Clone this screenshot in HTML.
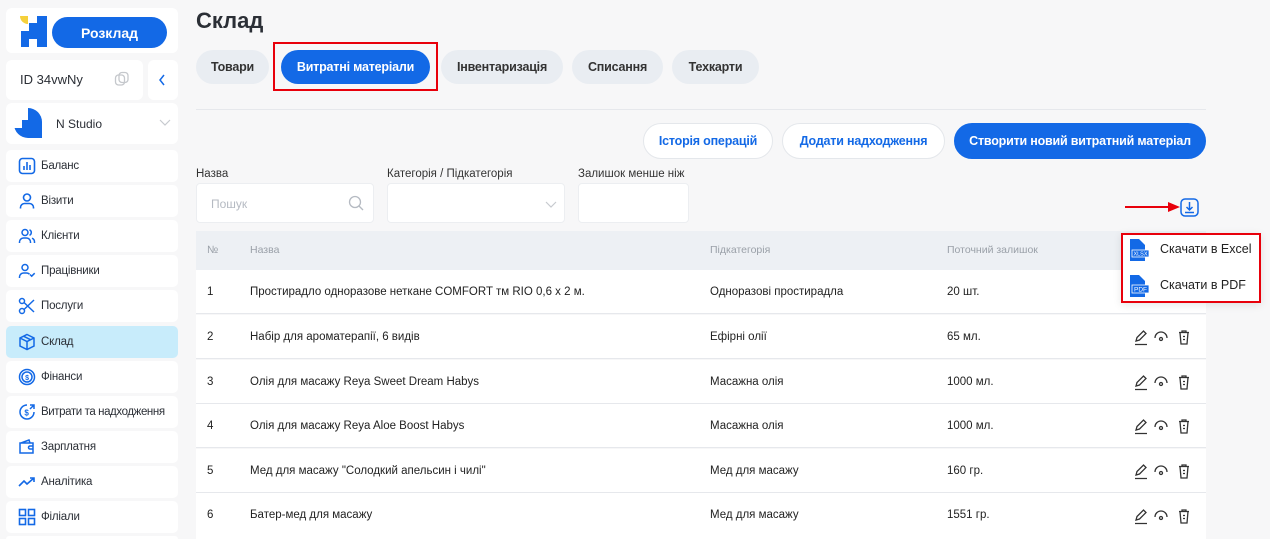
<!DOCTYPE html>
<html><head><meta charset="utf-8"><style>
*{box-sizing:border-box;margin:0;padding:0}
html,body{width:1270px;height:539px;overflow:hidden}
body{background:#f7f7f8;font-family:"Liberation Sans",Arial,sans-serif;position:relative;color:#2b2f36}
.a{position:absolute}
.card{position:absolute;background:#fff;border-radius:6px}
.mi{position:absolute;left:6px;width:172px;height:32px;background:#fff;border-radius:5px;font-size:11.5px;color:#2b2f36;white-space:nowrap;letter-spacing:-0.2px}
.mi svg{position:absolute;left:12px;top:7px;width:18px;height:18px}
.mi span{position:absolute;left:35px;top:10px}
.tab{position:absolute;top:50px;height:34px;border-radius:17px;background:#e9edf2;font-size:12.5px;font-weight:bold;color:#333;display:flex;align-items:center;justify-content:center;white-space:nowrap;letter-spacing:-0.2px}
.btn{position:absolute;top:123px;height:36px;border-radius:18px;background:#fff;border:1px solid #e4e7eb;color:#1369e6;font-size:12.5px;font-weight:bold;display:flex;align-items:center;justify-content:center;white-space:nowrap;letter-spacing:-0.2px}
.lbl{position:absolute;top:168px;font-size:11.5px;color:#333}
.inp{position:absolute;top:183px;height:40px;background:#fff;border:1px solid #eceef1;border-radius:4px}
.row{position:absolute;left:196px;width:1010px;height:44px;background:#fff;border-bottom:1px solid #e6e8ec;font-size:11.5px;color:#222;white-space:nowrap}
.row span{position:absolute;top:16px}
</style></head><body>

<!-- sidebar -->
<div class="card" style="left:6px;top:8px;width:172px;height:45px"></div>
<div class="a" style="left:20px;top:16px;width:8px;height:8px;background:#f5d03b;border-radius:0 0 0 8px"></div>
<div class="a" style="left:29px;top:23px;width:8px;height:8px;background:#1369e6"></div>
<div class="a" style="left:21px;top:31px;width:26px;height:8px;background:#1369e6"></div>
<div class="a" style="left:21px;top:39px;width:8px;height:8px;background:#1369e6"></div>
<div class="a" style="left:37px;top:39px;width:10px;height:8px;background:#1369e6"></div>
<div class="a" style="left:37px;top:16px;width:10px;height:16px;background:#1369e6"></div>
<div class="a" style="left:52px;top:17px;width:115px;height:31px;background:#1369e6;border-radius:16px;color:#fff;font-weight:bold;font-size:14px;display:flex;align-items:center;justify-content:center">Розклад</div>

<div class="card" style="left:6px;top:60px;width:137px;height:40px"></div>
<div class="a" style="left:20px;top:72px;font-size:13px">ID 34vwNy</div>
<svg class="a" style="left:114px;top:71px" width="16" height="16" viewBox="0 0 16 16" fill="none" stroke="#c5c8cc" stroke-width="1.3"><rect x="1.5" y="4" width="9" height="10" rx="3"/><rect x="5" y="1.5" width="9" height="10" rx="3"/></svg>
<div class="card" style="left:148px;top:60px;width:30px;height:40px"></div>
<svg class="a" style="left:158px;top:74px" width="8" height="12" viewBox="0 0 8 12" fill="none" stroke="#1369e6" stroke-width="1.5"><path d="M6 1L2 6l4 5"/></svg>

<div class="card" style="left:6px;top:103px;width:172px;height:41px"></div>
<div class="a" style="left:14px;top:108px;width:28px;height:30px;background:#1369e6;border-radius:0 14px 0 14px"></div>
<div class="a" style="left:14px;top:108px;width:14px;height:12px;background:#fff"></div>
<div class="a" style="left:14px;top:120px;width:8px;height:8px;background:#fff"></div>
<div class="a" style="left:56px;top:117px;font-size:12px">N Studio</div>
<svg class="a" style="left:159px;top:119px" width="12" height="8" viewBox="0 0 12 8" fill="none" stroke="#c7cacf" stroke-width="1.2"><path d="M1 1l5 5 5-5"/></svg>

<div class="mi" style="top:150px"><svg viewBox="0 0 18 18" fill="none" stroke="#1369e6" stroke-width="1.6"><rect x="1.5" y="1.5" width="15" height="15" rx="3"/><path d="M6 13V9M9 13V5M12 13V8"/></svg><span>Баланс</span></div>
<div class="mi" style="top:185px"><svg viewBox="0 0 18 18" fill="none" stroke="#1369e6" stroke-width="1.6"><circle cx="9" cy="5.5" r="3.5"/><path d="M2.5 16.5v-1a4 4 0 0 1 4-4h5a4 4 0 0 1 4 4v1"/></svg><span>Візити</span></div>
<div class="mi" style="top:220px"><svg viewBox="0 0 18 18" fill="none" stroke="#1369e6" stroke-width="1.5"><circle cx="7" cy="5.5" r="3"/><path d="M1.5 16v-1a4 4 0 0 1 4-4h3a4 4 0 0 1 4 4v1M11.5 2.8a3 3 0 0 1 0 5.5M14 11.2a4 4 0 0 1 2.5 3.8v1"/></svg><span>Клієнти</span></div>
<div class="mi" style="top:255px"><svg viewBox="0 0 18 18" fill="none" stroke="#1369e6" stroke-width="1.5"><circle cx="7" cy="5.5" r="3"/><path d="M1.5 16v-1a4 4 0 0 1 4-4h3a4 4 0 0 1 3 1.3M12 12.5l1.7 1.7 3-3"/></svg><span>Працівники</span></div>
<div class="mi" style="top:290px"><svg viewBox="0 0 18 18" fill="none" stroke="#1369e6" stroke-width="1.5"><circle cx="4" cy="4" r="2.5"/><circle cx="4" cy="14" r="2.5"/><path d="M6 5.5L16 15M6 12.5L16 3"/></svg><span>Послуги</span></div>
<div class="mi" style="top:326px;background:#c8ecfb"><svg viewBox="0 0 18 18" fill="none" stroke="#1369e6" stroke-width="1.5"><path d="M9 1.5l7 3.5v8L9 16.5 2 13V5zM2 5l7 3.5L16 5M9 8.5v8M5.5 3.2l7 3.5"/></svg><span>Склад</span></div>
<div class="mi" style="top:361px"><svg viewBox="0 0 18 18" fill="none" stroke="#1369e6" stroke-width="1.5"><circle cx="9" cy="9" r="7.5"/><circle cx="9" cy="9" r="5"/><text x="9" y="12" font-size="7" text-anchor="middle" fill="#1369e6" stroke="none" font-weight="bold">$</text></svg><span>Фінанси</span></div>
<div class="mi" style="top:396px"><svg viewBox="0 0 18 18" fill="none" stroke="#1369e6" stroke-width="1.5"><path d="M16 9A7 7 0 1 1 9 2M12 2h4v4M16 2l-4 4"/><text x="8.5" y="12.5" font-size="8" text-anchor="middle" fill="#1369e6" stroke="none" font-weight="bold">$</text></svg><span style="letter-spacing:-0.4px">Витрати та надходження</span></div>
<div class="mi" style="top:431px"><svg viewBox="0 0 18 18" fill="none" stroke="#1369e6" stroke-width="1.5"><path d="M3 5l8-3 1 3M2 5h13v10H2zM15 8h-3a1.5 1.5 0 0 0 0 3h3"/></svg><span>Зарплатня</span></div>
<div class="mi" style="top:466px"><svg viewBox="0 0 18 18" fill="none" stroke="#1369e6" stroke-width="1.6"><path d="M1 13l5-5 3 3 7-6M12 5h4v4"/></svg><span>Аналітика</span></div>
<div class="mi" style="top:501px"><svg viewBox="0 0 18 18" fill="none" stroke="#1369e6" stroke-width="1.6"><rect x="1.5" y="1.5" width="6" height="6"/><rect x="10.5" y="1.5" width="6" height="6"/><rect x="1.5" y="10.5" width="6" height="6"/><rect x="10.5" y="10.5" width="6" height="6"/></svg><span>Філіали</span></div>
<div class="mi" style="top:536px;height:3px;border-radius:5px 5px 0 0"></div>

<!-- main -->
<div class="a" style="left:196px;top:8px;font-size:22px;font-weight:bold;color:#2b2f36">Склад</div>
<div class="tab" style="left:196px;width:73px">Товари</div>
<div class="tab" style="left:281px;width:149px;background:#1369e6;color:#fff">Витратні матеріали</div>
<div class="a" style="left:273px;top:42px;width:165px;height:49px;border:2px solid #e8000b"></div>
<div class="tab" style="left:441px;width:122px">Інвентаризація</div>
<div class="tab" style="left:572px;width:91px">Списання</div>
<div class="tab" style="left:672px;width:87px">Техкарти</div>
<div class="a" style="left:196px;top:109px;width:1010px;height:1px;background:#e6e8ec"></div>

<div class="btn" style="left:643px;width:130px">Історія операцій</div>
<div class="btn" style="left:782px;width:163px">Додати надходження</div>
<div class="btn" style="left:954px;width:252px;background:#1369e6;color:#fff;border-color:#1369e6">Створити новий витратний матеріал</div>

<div class="lbl" style="left:196px">Назва</div>
<div class="lbl" style="left:387px">Категорія / Підкатегорія</div>
<div class="lbl" style="left:578px">Залишок менше ніж</div>
<div class="inp" style="left:196px;width:178px"><span class="a" style="left:14px;top:13px;font-size:12px;color:#b5bac2">Пошук</span>
<svg class="a" style="left:151px;top:11px" width="16" height="16" viewBox="0 0 16 16" fill="none" stroke="#b5bac2" stroke-width="1.3"><circle cx="7" cy="7" r="5.5"/><path d="M11 11l4 4"/></svg></div>
<div class="inp" style="left:387px;width:178px"><svg class="a" style="left:157px;top:17px" width="12" height="8" viewBox="0 0 12 8" fill="none" stroke="#c7cacf" stroke-width="1.2"><path d="M1 1l5 5 5-5"/></svg></div>
<div class="inp" style="left:578px;width:111px"></div>

<!-- download -->
<div class="a" style="left:1125px;top:206px;width:46px;height:2px;background:#e8000b"></div>
<div class="a" style="left:1168px;top:202px;width:0;height:0;border-left:12px solid #e8000b;border-top:5px solid transparent;border-bottom:5px solid transparent"></div>
<svg class="a" style="left:1180px;top:198px" width="19" height="19" viewBox="0 0 19 19" fill="none" stroke="#1369e6" stroke-width="1.5"><rect x="1" y="1" width="17" height="17" rx="4"/><path d="M9.5 4v8M6.5 9l3 3 3-3M5 14.5h9"/></svg>

<!-- table -->
<div class="a" style="left:196px;top:231px;width:1010px;height:39px;background:#edf0f4;font-size:10.5px;color:#9aa0a8">
<span class="a" style="left:11px;top:13px">№</span><span class="a" style="left:54px;top:13px">Назва</span><span class="a" style="left:514px;top:13px">Підкатегорія</span><span class="a" style="left:751px;top:13px">Поточний залишок</span></div>

<div class="row" style="top:270px"><span style="left:11px">1</span><span style="left:54px">Простирадло одноразове нетканe COMFORT тм RIO 0,6 х 2 м.</span><span style="left:514px">Одноразові простирадла</span><span style="left:751px">20 шт.</span></div>
<div class="row" style="top:315px"><span style="left:11px">2</span><span style="left:54px">Набір для ароматерапії, 6 видів</span><span style="left:514px">Ефірні олії</span><span style="left:751px">65 мл.</span></div>
<div class="row" style="top:360px"><span style="left:11px">3</span><span style="left:54px">Олія для масажу Reya Sweet Dream Habys</span><span style="left:514px">Масажна олія</span><span style="left:751px">1000 мл.</span></div>
<div class="row" style="top:404px"><span style="left:11px">4</span><span style="left:54px">Олія для масажу Reya Aloe Boost Habys</span><span style="left:514px">Масажна олія</span><span style="left:751px">1000 мл.</span></div>
<div class="row" style="top:449px"><span style="left:11px">5</span><span style="left:54px">Мед для масажу "Солодкий апельсин і чилі"</span><span style="left:514px">Мед для масажу</span><span style="left:751px">160 гр.</span></div>
<div class="row" style="top:493px;height:46px;border-bottom:none"><span style="left:11px">6</span><span style="left:54px">Батер-мед для масажу</span><span style="left:514px">Мед для масажу</span><span style="left:751px">1551 гр.</span></div>

<svg width="0" height="0" style="position:absolute"><defs>
<g id="acts" fill="none" stroke="#333" stroke-width="1.3">
<path d="M2 12l1-3.5 6.5-6.5 2.5 2.5L5.5 11z M1 15.5h12"/>
<path d="M21 9a6 6 0 0 1 12 0"/><circle cx="27" cy="10" r="1.5"/>
<path d="M45 3.5h10M48 3.5V2h4v1.5M46 3.5l1 11.5h6l1-11.5M49 7.5h2M49 10.5h2"/>
</g></defs></svg>
<svg class="a" style="left:1134px;top:329px" width="60" height="17"><use href="#acts"/></svg>
<svg class="a" style="left:1134px;top:374px" width="60" height="17"><use href="#acts"/></svg>
<svg class="a" style="left:1134px;top:418px" width="60" height="17"><use href="#acts"/></svg>
<svg class="a" style="left:1134px;top:463px" width="60" height="17"><use href="#acts"/></svg>
<svg class="a" style="left:1134px;top:508px" width="60" height="17"><use href="#acts"/></svg>

<!-- dropdown -->
<div class="a" style="left:1121px;top:233px;width:140px;height:70px;background:#fff;border:2px solid #e8000b;box-shadow:0 2px 8px rgba(0,0,0,.1)"></div>
<svg class="a" style="left:1129px;top:239px" width="22" height="22" viewBox="0 0 22 22"><path d="M1 0h9l6 6v16H1z" fill="#1369e6"/><rect x="3" y="11" width="17" height="7" fill="#1369e6" stroke="#fff" stroke-width=".8"/><text x="11.5" y="16.5" font-size="5.5" fill="#fff" text-anchor="middle" font-family="Liberation Sans">XLSX</text></svg>
<div class="a" style="left:1160px;top:242px;font-size:12.5px;color:#222">Скачати в Excel</div>
<svg class="a" style="left:1129px;top:275px" width="22" height="22" viewBox="0 0 22 22"><path d="M1 0h9l6 6v16H1z" fill="#1369e6"/><rect x="3" y="10" width="17" height="8" fill="#1369e6" stroke="#fff" stroke-width=".8"/><text x="11.5" y="16.5" font-size="6.5" fill="#fff" text-anchor="middle" font-family="Liberation Sans">PDF</text></svg>
<div class="a" style="left:1160px;top:278px;font-size:12.5px;color:#222">Скачати в PDF</div>
</body></html>
